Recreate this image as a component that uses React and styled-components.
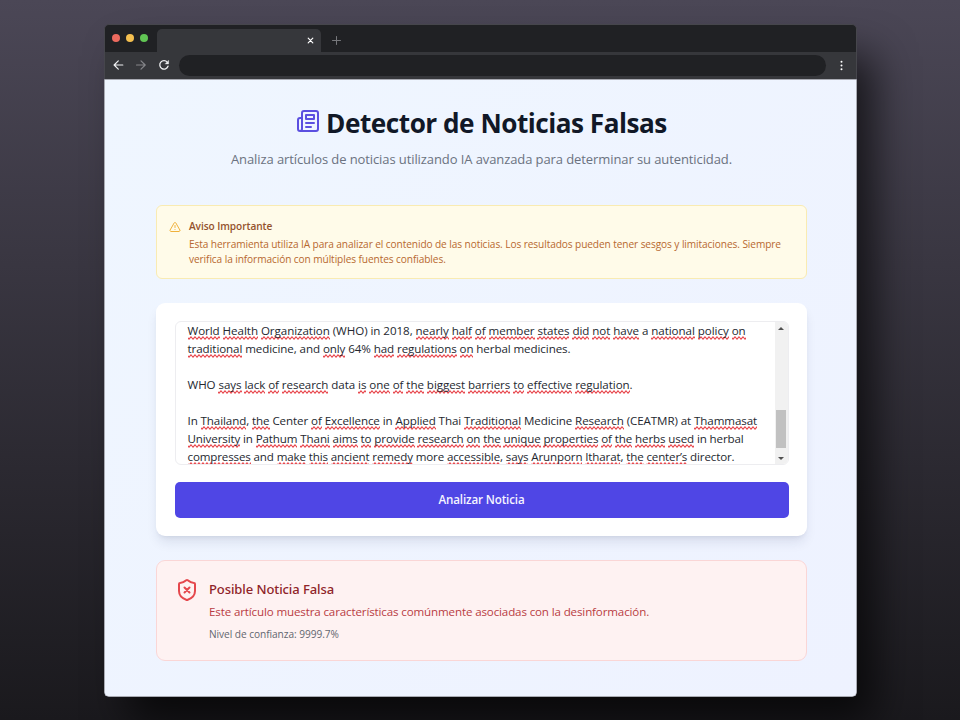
import React from 'react';
import styled, { createGlobalStyle } from 'styled-components';

const Global = createGlobalStyle`
  * { box-sizing: border-box; }
  body {
    margin: 0;
    font-family: "Open Sans", "Noto Sans", sans-serif;
    color: #1f2937;
  }
  svg { display: block; flex: none; }
  h1, h2, h3, p { margin: 0; }
`;

const Desktop = styled.div`
  height: 720px;
  padding: 24px 104px;
  overflow: hidden;
  background: linear-gradient(180deg, #4b4756 0%, #1a191d 100%);
`;

const Browser = styled.div`
  display: flex;
  flex-direction: column;
  height: 673px;
  width: 753px;
  border-radius: 5px;
  overflow: hidden;
  box-shadow: 20px 28px 42px -4px rgba(0, 0, 0, 0.68);
`;

const TabBar = styled.div`
  display: flex;
  height: 28px;
  padding: 0 7px;
  background: #202124;
  border: 1px solid #46464c;
  border-width: 1px 1px 0;
  border-radius: 5px 5px 0 0;
`;

const Lights = styled.div`
  display: flex;
  gap: 6px;
  padding-top: 9px;
  width: 45px;
`;

const Light = styled.i`
  width: 8px;
  height: 8px;
  border-radius: 50%;
  background: ${(p) => p.$color};
`;

const Tab = styled.div`
  display: flex;
  justify-content: flex-end;
  align-items: center;
  width: 164px;
  height: 24px;
  margin-top: 4px;
  padding: 0 7px 1px;
  border-radius: 5px 5px 0 0;
  background: #36373b;
`;

const NewTab = styled.div`
  padding: 11px 0 0 11px;
`;

const Toolbar = styled.div`
  display: flex;
  align-items: center;
  height: 27px;
  padding: 0 9px 1px 7px;
  background: #36373b;
  border: 1px solid #46464c;
  border-width: 0 1px;
`;

const NavIcons = styled.div`
  display: flex;
  gap: 11px;
  width: 67px;
`;

const Address = styled.div`
  flex: 1;
  height: 21px;
  margin-right: 10px;
  border-radius: 11px;
  background: #202124;
`;

const Page = styled.main`
  flex: 1;
  display: flex;
  flex-direction: column;
  padding: 28px 49px 0 51px;
  border: 1px solid #a9abb3;
  border-radius: 0 0 4px 4px;
  background: linear-gradient(135deg, #eff6ff 0%, #eef2ff 100%);
`;

const Header = styled.header`
  display: flex;
  flex-direction: column;
  align-items: center;
  height: 97px;
`;

const TitleRow = styled.div`
  display: flex;
  align-items: flex-start;
  gap: 6px;
  height: 28px;
  padding-top: 1px;
`;

const Title = styled.h1`
  font-size: 26.2px;
  line-height: 28px;
  font-weight: 700;
  letter-spacing: -0.5px;
  color: #111827;
`;

const Subtitle = styled.p`
  margin-top: 13px;
  font-size: 13px;
  line-height: 21px;
  letter-spacing: -0.093px;
  color: #6b7280;
`;

const Warning = styled.section`
  display: flex;
  gap: 8px;
  height: 74px;
  padding: 12px;
  border: 1px solid #f9ebb2;
  border-radius: 6px;
  background: #fffbe9;
`;

const WarningMark = styled.div`
  padding-top: 3px;
`;

const WarningTitle = styled.h3`
  padding-top: 1px;
  font-size: 10.13px;
  line-height: 15px;
  font-weight: 600;
  letter-spacing: -0.07px;
  color: #94522c;
`;

const WarningText = styled.p`
  margin-top: 3px;
  font-size: 10.13px;
  line-height: 15px;
  letter-spacing: -0.092px;
  white-space: nowrap;
  color: #b7682f;
`;

const Card = styled.section`
  display: flex;
  flex-direction: column;
  gap: 17px;
  height: 233px;
  margin-top: 24px;
  padding: 18px 18.5px;
  border-radius: 9px;
  background: #fff;
  box-shadow: 0 8px 12px -2px rgba(30, 40, 80, 0.1), 0 3px 5px -3px rgba(30, 40, 80, 0.12);
`;

const Editor = styled.div`
  display: flex;
  height: 144px;
  border: 1px solid #ededf0;
  border-radius: 6px;
  overflow: hidden;
`;

const Lines = styled.div`
  flex: 1;
  padding-left: 12px;
  font-size: 11.58px;
  line-height: 18px;
  color: #24282f;
`;

const Line = styled.div`
  height: 18px;
  white-space: pre;
  letter-spacing: ${(p) => p.$track}px;
`;

const Misspelt = styled.span`
  padding-bottom: 2px;
  background: url("data:image/svg+xml,%3Csvg xmlns='http://www.w3.org/2000/svg' width='4' height='4'%3E%3Cpath d='M-1 .8L1 3.2L3 .8L5 3.2' fill='none' stroke='%23e84a50' stroke-width='1.1'/%3E%3C/svg%3E") left bottom repeat-x;
`;

const Scrollbar = styled.div`
  display: flex;
  flex-direction: column;
  align-items: center;
  width: 13px;
  padding: 5px 0 4px;
  background: #f1f1f1;
`;

const Arrow = styled.i`
  border: 3px solid transparent;
  ${(p) => (p.$up ? 'border-bottom: 3px solid #505050; border-top: 0;' : 'border-top: 3px solid #505050; border-bottom: 0;')}
`;

const Thumb = styled.div`
  width: 10px;
  height: 38px;
  margin: auto 0 9px;
  background: #c1c1c1;
`;

const Submit = styled.button`
  height: 36px;
  padding: 0;
  border: 0;
  border-radius: 5px;
  background: #4f46e5;
  color: #f5f4ff;
  font: 600 11.6px/36px "Open Sans", sans-serif;
  letter-spacing: -0.14px;
`;

const Result = styled.section`
  display: flex;
  gap: 10px;
  height: 101px;
  margin-top: 24px;
  padding: 17px 18px;
  border: 1px solid #fad6d6;
  border-radius: 9px;
  background: #fef2f2;
`;

const ResultTitle = styled.h2`
  margin-top: 1px;
  font-family: "Noto Sans", sans-serif;
  font-size: 13px;
  line-height: 21px;
  font-weight: 500;
  letter-spacing: -0.09px;
  color: #8f2429;
`;

const ResultText = styled.p`
  margin-top: 3px;
  font-size: 11.58px;
  line-height: 18px;
  letter-spacing: -0.138px;
  color: #b93c42;
`;

const Confidence = styled.p`
  margin-top: 6px;
  font-size: 10.13px;
  line-height: 15px;
  letter-spacing: -0.05px;
  color: #62666f;
`;

/* Words between underscores carry the spell-checker underline. */
const article = [
  { track: -0.051, text: '_World Health Organization_ (WHO) in 2018, _nearly half of member states did not have_ a _national policy on_' },
  { track: -0.09, text: '_traditional_ medicine, and _only_ 64% _had regulations on_ herbal medicines.' },
  { track: 0, text: '' },
  { track: -0.065, text: 'WHO _says lack of research_ data _is one of the biggest barriers to effective regulation_.' },
  { track: 0, text: '' },
  { track: -0.093, text: 'In _Thailand_, _the_ Center _of Excellence_ in _Applied_ Thai _Traditional_ Medicine _Research_ (CEATMR) at _Thammasat_' },
  { track: -0.121, text: '_University_ in _Pathum Thani aims to provide research on the unique properties of the herbs used_ in herbal' },
  { track: -0.14, text: '_compresses_ and _make this ancient remedy_ more _accessible_, _says Arunporn Itharat_, _the center’s_ director.' },
];

function renderLine(text) {
  return text.split('_').map((run, i) =>
    i % 2 === 0
      ? run
      : run.split(' ').map((word, j) => (
          <React.Fragment key={`${i}-${j}`}>
            {j > 0 && ' '}
            <Misspelt>{word}</Misspelt>
          </React.Fragment>
        ))
  );
}

function Glyph({ size = 24, box = 24, color, weight = 2, children }) {
  return (
    <svg width={size} height={size} viewBox={`0 0 ${box} ${box}`} fill="none" stroke={color} strokeWidth={weight} strokeLinecap="round" strokeLinejoin="round">
      {children}
    </svg>
  );
}

export default function App() {
  return (
    <Desktop>
      <Global />
      <Browser>
        <TabBar>
          <Lights>
            <Light $color="#ec6a5e" />
            <Light $color="#f4bf4f" />
            <Light $color="#61c554" />
          </Lights>
          <Tab>
            <Glyph size={7} box={7} color="#fff" weight={1.2}>
              <path d="M1.2 1.2l4.6 4.6M5.8 1.2L1.2 5.8" />
            </Glyph>
          </Tab>
          <NewTab>
            <Glyph size={9} box={9} color="#77787c" weight={1}>
              <path d="M4.5 .5v8M.5 4.5h8" />
            </Glyph>
          </NewTab>
        </TabBar>
        <Toolbar>
          <NavIcons>
            <Glyph size={12} box={12} color="#eeeff1" weight={1.2}>
              <path d="M10.8 6H2.3M6.3 1.8L2.1 6 6.3 10.2" />
            </Glyph>
            <Glyph size={12} box={12} color="#85868a" weight={1.2}>
              <path d="M1.5 6H10M6 1.8L10.2 6 6 10.2" />
            </Glyph>
            <Glyph size={12} box={12} color="#eeeff1" weight={1.3}>
              <path d="M10 7.2A4.2 4.2 0 1 1 9.3 3.3" />
              <path d="M10.6 1.6v3.3H7.3z" fill="#eeeff1" strokeWidth=".4" />
            </Glyph>
          </NavIcons>
          <Address />
          <Glyph size={11} box={11} color="none">
            <g fill="#fff">
              <circle cx="5.5" cy="1.7" r="1" />
              <circle cx="5.5" cy="5.5" r="1" />
              <circle cx="5.5" cy="9.3" r="1" />
            </g>
          </Glyph>
        </Toolbar>
        <Page>
          <Header>
            <TitleRow>
              <Glyph color="#5b4fe0">
                <path d="M4 22h16a2 2 0 0 0 2-2V4a2 2 0 0 0-2-2H8a2 2 0 0 0-2 2v16a2 2 0 0 1-2 2Zm0 0a2 2 0 0 1-2-2v-9c0-1.1.9-2 2-2h2" />
                <path d="M18 14h-8M15 18h-5M10 6h8v4h-8V6Z" />
              </Glyph>
              <Title>Detector de Noticias Falsas</Title>
            </TitleRow>
            <Subtitle>Analiza artículos de noticias utilizando IA avanzada para determinar su autenticidad.</Subtitle>
          </Header>
          <Warning>
            <WarningMark>
              <Glyph size={12} color="#f0b13c">
                <path d="m21.73 18-8-14a2 2 0 0 0-3.48 0l-8 14A2 2 0 0 0 4 21h16a2 2 0 0 0 1.73-3M12 9v4M12 17h.01" />
              </Glyph>
            </WarningMark>
            <div>
              <WarningTitle>Aviso Importante</WarningTitle>
              <WarningText>
                Esta herramienta utiliza IA para analizar el contenido de las noticias. Los resultados pueden tener sesgos y limitaciones. Siempre
                <br />
                verifica la información con múltiples fuentes confiables.
              </WarningText>
            </div>
          </Warning>
          <Card>
            <Editor>
              <Lines>
                {article.map((line, i) => (
                  <Line key={i} $track={line.track}>{renderLine(line.text)}</Line>
                ))}
              </Lines>
              <Scrollbar>
                <Arrow $up />
                <Thumb />
                <Arrow />
              </Scrollbar>
            </Editor>
            <Submit>Analizar Noticia</Submit>
          </Card>
          <Result>
            <Glyph color="#e5484d">
              <path d="M20 13c0 5-3.5 7.5-7.66 8.95a1 1 0 0 1-.67-.01C7.5 20.5 4 18 4 13V6a1 1 0 0 1 1-1c2 0 4.5-1.2 6.24-2.72a1.17 1.17 0 0 1 1.52 0C14.51 3.81 17 5 19 5a1 1 0 0 1 1 1z" />
              <path d="m14.5 9.5-5 5M9.5 9.5l5 5" />
            </Glyph>
            <div>
              <ResultTitle>Posible Noticia Falsa</ResultTitle>
              <ResultText>Este artículo muestra características comúnmente asociadas con la desinformación.</ResultText>
              <Confidence>Nivel de confianza: 9999.7%</Confidence>
            </div>
          </Result>
        </Page>
      </Browser>
    </Desktop>
  );
}
